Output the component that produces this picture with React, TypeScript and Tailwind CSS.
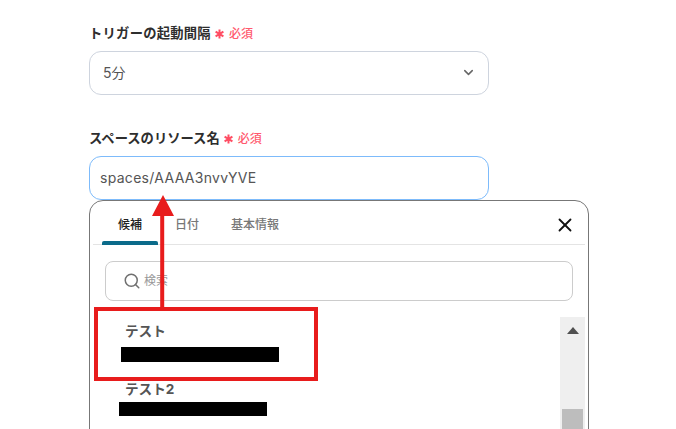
import { ChevronDown, Search, X } from 'lucide-react'

const font = { fontFamily: 'Inter, "Noto Sans CJK JP", sans-serif' }

// ラベル + 必須マーク
function FieldLabel({ children, className = '' }: { children: string; className?: string }) {
  return (
    <div className="flex items-center h-5 text-[13.3px] font-bold text-[#2e2e2e]">
      <span className={`mt-[1px] ${className}`}>{children}</span>
      <span className="ml-[4px] text-[#ff5a6e] text-[12px] font-medium flex items-center gap-[5px] mt-[1px]">
        <svg width="9" height="10" viewBox="0 0 9 10" className="mt-[1px]">
          <path d="M4.5 .5v9M.6 2.7l7.8 4.6M8.4 2.7L.6 7.3" stroke="#ff4d63" strokeWidth="2" />
        </svg>
        必須
      </span>
    </div>
  )
}

export default function App() {
  return (
    <div className="relative w-[676px] h-[429px] overflow-hidden bg-white" style={font}>
      <div className="w-[500px] ml-[89px] pt-[23px]">
        <FieldLabel className="tracking-[0.25px]">トリガーの起動間隔</FieldLabel>
        <div className="mt-[8px] w-[400px] h-[44px] flex items-center justify-between pl-[13px] pr-[12px] pb-[1px] border border-[#ced4de] rounded-[12px] text-[14px] text-[#555]">
          <span>5分</span>
          <ChevronDown size={15} strokeWidth={2.4} className="text-[#666]" />
        </div>

        <div className="mt-[33px]">
          <FieldLabel>スペースのリソース名</FieldLabel>
        </div>
        <div className="mt-[8px] w-[400px] h-[44px] flex items-center pl-[10px] pb-[1px] border border-[#7dbbfb] rounded-[12px] text-[14px] tracking-[0.3px] text-[#555]">
          spaces/AAAA3nvvYVE
        </div>

        {/* 候補ポップアップ */}
        <div className="w-[500px] h-[260px] border border-[#777] rounded-t-[14px] bg-white">
          <div className="relative h-[44px] mx-[3px] border-b border-[#e4e4e4] flex text-[12px] font-medium">
            <div className="relative w-[56px] ml-[9px] pt-[15px] text-center text-[#222]">
              候補
              <div className="absolute left-0 right-0 bottom-[-1px] h-[4px] rounded-t-[2px] bg-[#0b6b8a]" />
            </div>
            <div className="ml-[17px] pt-[15px] text-[#777]">日付</div>
            <div className="ml-[32px] pt-[15px] text-[#777]">基本情報</div>
            <X size={22} strokeWidth={2} className="absolute right-[9px] top-[13px] text-[#111]" />
          </div>

          <div className="mt-[16px] mx-[15px] h-[40px] w-[468px] flex items-center pl-[17px] border border-[#ccc] rounded-[8px]">
            <Search size={18} strokeWidth={2} className="text-[#707070]" />
            <span className="ml-[3px] text-[12px] text-[#999]">検索</span>
          </div>

          <div className="mt-[16px] flex h-[120px]">
            <div className="flex-1 text-[13.6px] font-bold text-[#555]">
              <div className="pl-[35px] pt-[5px] leading-[18px]">テスト</div>
              <div className="ml-[31px] mt-[7px] w-[158px] h-[15px] bg-black" />
              <div className="pl-[35px] mt-[18px] leading-[18px]">テスト2</div>
              <div className="ml-[29px] mt-[4px] w-[148px] h-[14px] bg-black" />
            </div>
            <div className="w-[25px] mr-[3px] h-full bg-[#efefef] flex flex-col items-center">
              <svg width="12" height="7" viewBox="0 0 12 7" className="mt-[10px]">
                <path d="M6 0l6 7H0z" fill="#505050" />
              </svg>
              <div className="mt-[75px] w-[21px] flex-1 bg-[#bdbdbd]" />
            </div>
          </div>
        </div>
      </div>

      {/* 赤い注釈 */}
      <div className="absolute left-[94px] top-[307px] w-[224px] h-[74px] border-[4px] border-[#e81c1c]" />
      <svg className="absolute left-[150px] top-[193px]" width="26" height="116" viewBox="0 0 26 116">
        <path d="M13 2L24 23H14.2V116H10.2V23H2z" fill="#e81c1c" />
      </svg>
    </div>
  )
}
